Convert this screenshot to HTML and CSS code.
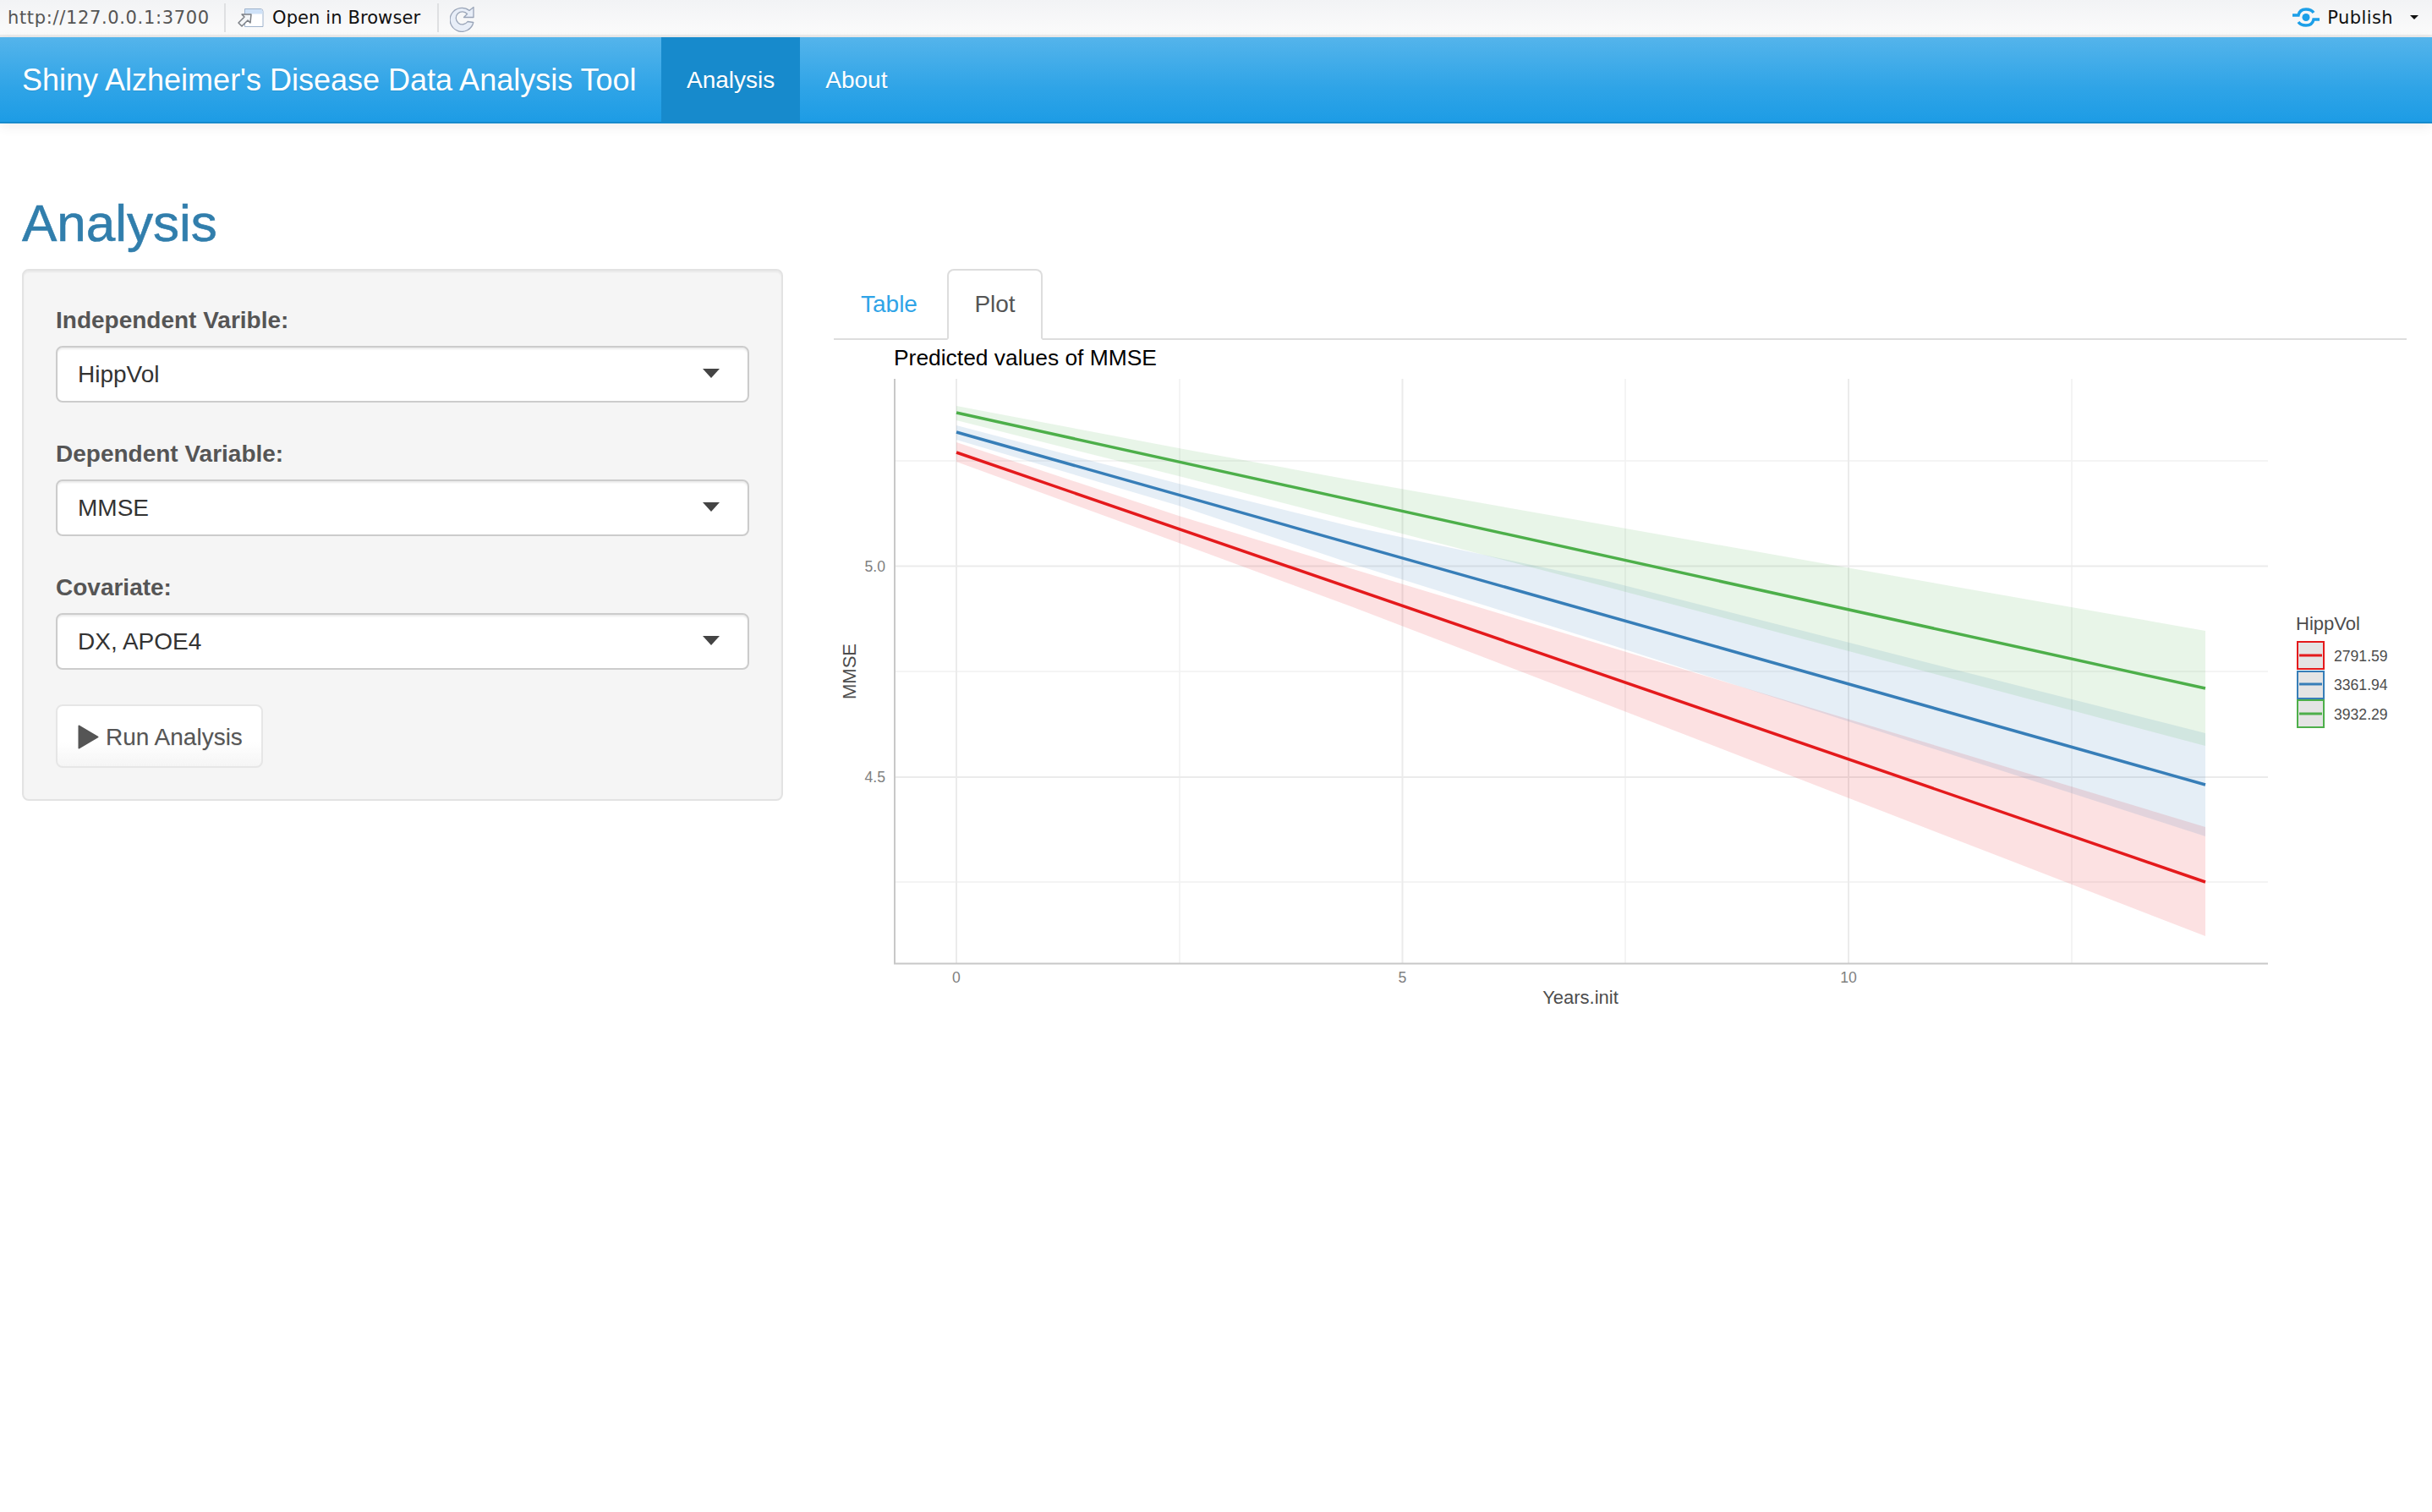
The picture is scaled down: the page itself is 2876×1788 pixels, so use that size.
FILE: index.html
```html
<!DOCTYPE html>
<html lang="en">
<head>
    <meta charset="UTF-8">
    <title>Shiny Alzheimer's Disease Data Analysis Tool</title>
    <link rel="stylesheet" href="styles.css">
</head>
<body>
    <!-- RStudio viewer toolbar -->
    <div class="toolbar">
        <span class="toolbar-url">http://127.0.0.1:3700</span>
        <span class="toolbar-sep"></span>
        <svg class="icon-open" width="32" height="24" viewBox="0 0 32 24">
            <path d="M9.5 1.5 H28 Q31 1.5 31 4.5 V22.5 H9.5 Z" fill="#fff" stroke="#9fb3cc"/>
            <path d="M10 2 H28 Q30.5 2 30.5 4.5 V7.5 H10 Z" fill="#cfe2f8"/>
            <path d="M17 8 L16 18 L13 15 L6 22 L2 18 L9 11 L6 8 Z" fill="#f4f6f8" stroke="#7b7f85" stroke-width="1.5" stroke-linejoin="round"/>
        </svg>
        <span class="toolbar-open">Open in Browser</span>
        <span class="toolbar-sep"></span>
        <svg class="icon-refresh" width="30" height="33" viewBox="0 0 30 33">
            <path d="M28 3.5 L28 15.5 L16.5 15.5 L20.5 11.5 A7.5 7.5 0 1 0 21 20.5 L27.8 21.5 A14 14 0 1 1 23 7.5 Z" fill="#e8eef8" stroke="#9aa5b8" stroke-width="1.3" stroke-linejoin="round"/>
        </svg>
        <div class="toolbar-right">
            <svg class="icon-publish" width="32" height="24" viewBox="0 0 32 24">
                <circle cx="16" cy="11.5" r="4.5" fill="#1c9fe8"/>
                <path d="M0 9 H7 C8 4 12 2 16 2 C20 2 23 3 25 6" fill="none" stroke="#1c9fe8" stroke-width="3.5"/>
                <path d="M32 14 H25 C24 19 20 21 16 21 C12 21 9 20 7 17" fill="none" stroke="#1c9fe8" stroke-width="3.5"/>
            </svg>
            <span class="toolbar-publish">Publish</span>
            <span class="toolbar-caret"></span>
        </div>
    </div>

    <nav class="navbar">
        <a class="navbar-brand">Shiny Alzheimer's Disease Data Analysis Tool</a>
        <a class="nav-link active">Analysis</a>
        <a class="nav-link">About</a>
    </nav>

    <main class="page">
        <h2 class="page-title">Analysis</h2>
        <div class="layout">
            <form class="side-panel">
                <div class="field">
                    <label>Independent Varible:</label>
                    <div class="select-box">HippVol<span class="select-caret"></span></div>
                </div>
                <div class="field">
                    <label>Dependent Variable:</label>
                    <div class="select-box">MMSE<span class="select-caret"></span></div>
                </div>
                <div class="field">
                    <label>Covariate:</label>
                    <div class="select-box">DX, APOE4<span class="select-caret"></span></div>
                </div>
                <button type="button" class="run-button">
                    <svg width="25" height="29" viewBox="0 0 25 29"><path d="M1.5 1.5 L23.5 14.5 L1.5 27.5 Z" fill="#555" stroke="#555" stroke-width="2" stroke-linejoin="round"/></svg>
                    <span>Run Analysis</span>
                </button>
            </form>

            <section class="main-panel">
                <ul class="tabs">
                    <li class="tab">Table</li>
                    <li class="tab active">Plot</li>
                </ul>
                <!-- viewBox uses page coordinates: x of the tab column, y just under the tab rule -->
                <svg class="plot" width="1860" height="800" viewBox="986 402 1860 800">
                    <g class="grid-minor">
                        <path d="M1058 545H2682M1058 794H2682M1058 1043H2682"/>
                        <path d="M1395 448V1139M1922 448V1139M2450 448V1139"/>
                    </g>
                    <g class="grid-major">
                        <path d="M1058 669.5H2682M1058 919H2682"/>
                        <path d="M1131 448V1139M1658.5 448V1139M2186 448V1139"/>
                    </g>

                    <polygon class="band" fill="#e41a1c" points="1131,523 1394,610 1600,673 1900,764 2608,978 2608,1107 1900,833 1600,718 1394,642 1131,546"/>
                    <polygon class="band" fill="#377eb8" points="1131,503 1394,572 1600,623 1900,687 2608,867 2608,989 1900,761 1600,667 1394,598 1131,520"/>
                    <polygon class="band" fill="#4daf4a" points="1131,480 1394,530 1600,568 1900,621 2608,746 2608,882 1900,694 1600,616 1394,563 1131,497"/>

                    <line class="trend" stroke="#e41a1c" x1="1131" y1="535" x2="2608" y2="1043"/>
                    <line class="trend" stroke="#377eb8" x1="1131" y1="511" x2="2608" y2="928"/>
                    <line class="trend" stroke="#4daf4a" x1="1131" y1="488" x2="2608" y2="814"/>

                    <path class="axis" d="M1058 448V1139.5H2682"/>

                    <text class="plot-title" x="1057" y="432">Predicted values of MMSE</text>
                    <text class="tick" x="1047" y="676" text-anchor="end">5.0</text>
                    <text class="tick" x="1047" y="925" text-anchor="end">4.5</text>
                    <text class="tick" x="1131" y="1162" text-anchor="middle">0</text>
                    <text class="tick" x="1658.5" y="1162" text-anchor="middle">5</text>
                    <text class="tick" x="2186" y="1162" text-anchor="middle">10</text>
                    <text class="axis-title" x="1869" y="1187" text-anchor="middle">Years.init</text>
                    <text class="axis-title" transform="translate(1012 794) rotate(-90)" text-anchor="middle">MMSE</text>

                    <text class="axis-title" x="2715" y="745">HippVol</text>
                    <rect class="key" x="2717" y="759" width="31" height="32" stroke="#e41a1c"/>
                    <line class="key-line" x1="2719" y1="775" x2="2746" y2="775" stroke="#e41a1c"/>
                    <text class="legend-label" x="2760" y="782">2791.59</text>
                    <rect class="key" x="2717" y="794" width="31" height="32" stroke="#377eb8"/>
                    <line class="key-line" x1="2719" y1="809" x2="2746" y2="809" stroke="#377eb8"/>
                    <text class="legend-label" x="2760" y="816">3361.94</text>
                    <rect class="key" x="2717" y="828" width="31" height="32" stroke="#4daf4a"/>
                    <line class="key-line" x1="2719" y1="844" x2="2746" y2="844" stroke="#4daf4a"/>
                    <text class="legend-label" x="2760" y="851">3932.29</text>
                </svg>
            </section>
        </div>
    </main>
</body>
</html>
```

FILE: styles.css
```css
html, body {
    margin: 0;
    background: #fff;
}
body {
    font-family: "Liberation Sans", Arial, sans-serif;
    color: #555;
}

/* toolbar */
.toolbar {
    height: 41px;
    display: flex;
    align-items: center;
    padding-left: 9px;
    background: linear-gradient(#f2f3f5, #fbfbfb);
    border-bottom: 3px solid #ececec;
    font-family: "DejaVu Sans", sans-serif;
    font-size: 21px;
}
.toolbar-url {
    color: #555;
    width: 256px;
    letter-spacing: 0.65px;
}
.toolbar-sep {
    width: 2px;
    height: 34px;
    background: #dfe0e2;
}
.icon-open {
    margin: 0 10px 0 13px;
}
.toolbar-open {
    color: #111;
    width: 195px;
    letter-spacing: 0.1px;
}
.icon-refresh {
    margin: 2px 0 0 13px;
}
.toolbar-right {
    margin-left: auto;
    display: flex;
    align-items: center;
    padding-right: 16px;
}
.toolbar-publish {
    color: #111;
    margin-left: 9px;
    letter-spacing: 0.4px;
}
.toolbar-caret {
    margin-left: 20px;
    border-left: 5px solid transparent;
    border-right: 5px solid transparent;
    border-top: 5px solid #111;
}

/* navbar */
.navbar {
    height: 100px;
    display: flex;
    align-items: stretch;
    background: linear-gradient(#54b4eb, #2fa4e7 60%, #1d9ce5);
    border-bottom: 2px solid #178acc;
    box-shadow: 0 3px 14px rgba(0, 0, 0, 0.08);
    color: #fff;
}
.navbar-brand {
    display: flex;
    align-items: center;
    font-size: 36px;
    padding: 2px 0 0 26px;
    width: 756px;
    text-shadow: 0 1px 0 rgba(0, 0, 0, 0.1);
}
.nav-link {
    display: flex;
    align-items: center;
    font-size: 28px;
    padding: 2px 30px 0;
    text-shadow: 0 1px 0 rgba(0, 0, 0, 0.1);
}
.nav-link.active {
    background: #178acc;
}

/* page */
.page {
    padding: 0 30px 0 26px;
}
.page-title {
    margin: 0;
    padding-top: 82px;
    height: 90px;
    font-size: 62px;
    font-weight: 500;
    line-height: 72px;
    color: #317eac;
    -webkit-text-stroke: 0.6px #317eac;
}
.layout {
    display: grid;
    grid-template-columns: 900px 1fr;
    column-gap: 60px;
    align-items: start;
}

/* left panel */
.side-panel {
    box-sizing: border-box;
    height: 629px;
    padding: 39px 38px 0;
    background: #f5f5f5;
    border: 2px solid #e3e3e3;
    border-radius: 8px;
    box-shadow: inset 0 2px 2px rgba(0, 0, 0, 0.05);
}
.field {
    margin-bottom: 41px;
}
.field label {
    display: block;
    height: 40px;
    margin-bottom: 10px;
    font-size: 28px;
    font-weight: bold;
    line-height: 40px;
}
.select-box {
    box-sizing: border-box;
    height: 67px;
    display: flex;
    align-items: center;
    justify-content: space-between;
    padding: 0 33px 0 24px;
    background: #fff;
    border: 2px solid #ccc;
    border-radius: 8px;
    box-shadow: inset 0 2px 2px rgba(0, 0, 0, 0.075);
    font-size: 28px;
    color: #333;
}
.select-caret {
    margin-bottom: 2px;
    border-left: 10px solid transparent;
    border-right: 10px solid transparent;
    border-top: 11px solid #444;
}
.run-button {
    box-sizing: border-box;
    width: 245px;
    height: 75px;
    margin-top: 1px;
    display: flex;
    align-items: center;
    gap: 8px;
    padding: 2px 0 0 24px;
    background: linear-gradient(#fff, #fff 60%, #f5f5f5);
    border: 2px solid #e6e6e6;
    border-radius: 8px;
    font-family: inherit;
    font-size: 28px;
    white-space: nowrap;
    color: #555;
    text-shadow: 0 1px 1px rgba(0, 0, 0, 0.1);
}

/* tabs */
.tabs {
    margin: 0;
    padding: 0 0 0 32px;
    height: 82px;
    list-style: none;
    display: flex;
    align-items: flex-end;
    border-bottom: 2px solid #ddd;
    font-size: 28px;
}
.tab {
    box-sizing: border-box;
    height: 84px;
    margin-bottom: -2px;
    display: flex;
    align-items: center;
    width: 102px;
    color: #2fa4e7;
}
.tab.active {
    width: 113px;
    justify-content: center;
    color: #555;
    background: #fff;
    border: 2px solid #ddd;
    border-bottom-color: #fff;
    border-radius: 8px 8px 0 0;
}

/* plot */
.plot {
    display: block;
}
.grid-minor path {
    fill: none;
    stroke: #f1f1f1;
    stroke-width: 1.5;
}
.grid-major path {
    fill: none;
    stroke: #ebebeb;
    stroke-width: 2;
}
.band {
    fill-opacity: 0.13;
}
.trend {
    stroke-width: 3.5;
}
.axis {
    fill: none;
    stroke: #c8c8c8;
    stroke-width: 2;
}
.plot-title {
    font-size: 26.4px;
    fill: #000;
}
.tick {
    font-size: 17.6px;
    fill: #808080;
}
.axis-title {
    font-size: 22px;
    fill: #4d4d4d;
}
.legend-label {
    font-size: 17.6px;
    fill: #4d4d4d;
}
.key {
    fill: #e4e4e4;
    stroke-width: 2;
}
.key-line {
    stroke-width: 3;
}
```
